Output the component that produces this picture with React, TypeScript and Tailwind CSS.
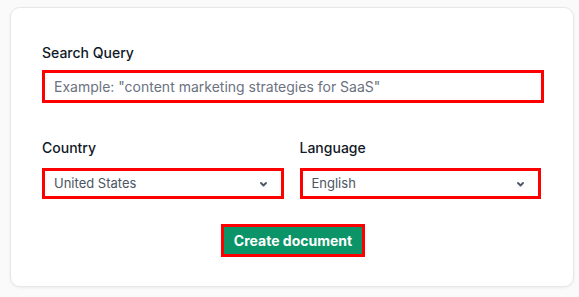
import React from 'react';

const Chevron = () => (
  <svg width="7" height="5" viewBox="0 0 7 5" fill="none" className="mt-[2px] shrink-0">
    <path d="M1 1L3.5 3.5L6 1" stroke="#4b5563" strokeWidth="1.8" strokeLinecap="round" strokeLinejoin="round" />
  </svg>
);

const SelectBox = ({ label, value }: { label: string; value: string }) => (
  <div className="flex flex-col">
    <label className="mb-[10px] text-[14px] leading-[20px] font-medium text-[#111827]">{label}</label>
    <div className="flex h-[31px] items-center justify-between border-[3px] border-[#ff0000] bg-white pl-[9px] pr-[14px]">
      <span className="text-[13px] text-[#4b5563]">{value}</span>
      <Chevron />
    </div>
  </div>
);

const App = () => {
  return (
    <div className="min-h-screen bg-[#fafafa] pl-[10px] pr-[5px] pt-[7px]" style={{ fontFamily: 'Inter, "Noto Sans", sans-serif' }}>
      <div className="h-[280px] rounded-[10px] border border-[#e5e7eb] bg-white pl-[31px] pt-[35px] shadow-[0_1px_3px_rgba(0,0,0,0.06)]">
        <label className="mb-[7px] block text-[14px] leading-[20px] font-medium text-[#111827]">Search Query</label>
        <div className="flex h-[33px] w-[502px] items-center border-[3px] border-[#ff0000] bg-white pl-[9px]">
          <span className="text-[14px] text-[#6b7280]">Example: "content marketing strategies for SaaS"</span>
        </div>

        <div className="mt-[35px] grid w-[499px] grid-cols-2 gap-4">
          <SelectBox label="Country" value="United States" />
          <SelectBox label="Language" value="English" />
        </div>

        <div className="mt-[25px] flex w-[502px] justify-center">
          <button className="flex h-[33px] w-[144px] items-center justify-center border-[3px] border-[#ff0000] bg-[#0a9467] text-[14px] font-bold text-white">
            Create document
          </button>
        </div>
      </div>
    </div>
  );
};

export default App;
